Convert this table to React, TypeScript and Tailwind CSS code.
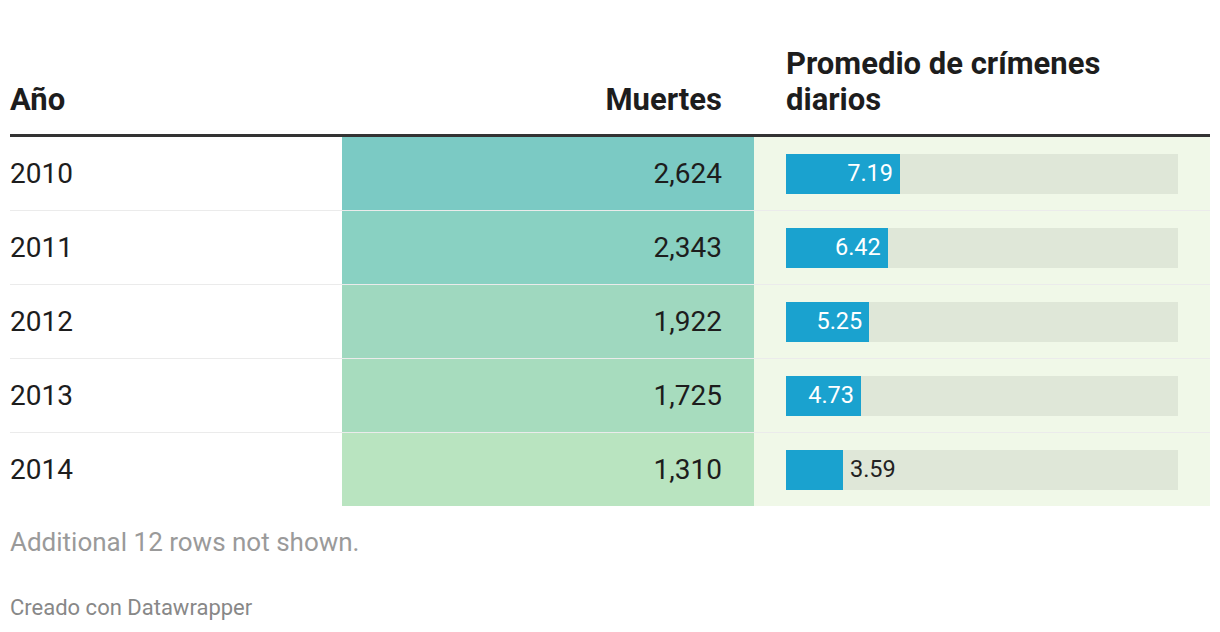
const rows = [
  { year: "2010", deaths: "2,624", avg: 7.19, bg: "bg-[#7bcac4]" },
  { year: "2011", deaths: "2,343", avg: 6.42, bg: "bg-[#89d1c2]" },
  { year: "2012", deaths: "1,922", avg: 5.25, bg: "bg-[#9fd8bf]" },
  { year: "2013", deaths: "1,725", avg: 4.73, bg: "bg-[#a7dcbe]" },
  { year: "2014", deaths: "1,310", avg: 3.59, bg: "bg-[#b9e4c0]" },
];

const MAX = 24.72;

function Bar({ value }: { value: number }) {
  const pct = (value / MAX) * 100;
  const inside = value > 4;
  return (
    <div className="flex h-10 w-full bg-[#dfe7d8]">
      <div className="flex h-full items-center justify-end bg-[#1aa2cf] pr-[7px]" style={{ width: `${pct}%` }}>
        {inside && <span className="text-[23.5px] text-white">{value.toFixed(2)}</span>}
      </div>
      {!inside && <span className="ml-[7px] flex items-center text-[23.5px] text-[#222]">{value.toFixed(2)}</span>}
    </div>
  );
}

export default function App() {
  return (
    <div className="w-[1220px] bg-white px-[10px] pt-[46px] font-['Roboto',sans-serif] text-[#1d1d1d]">
      <div className="grid grid-cols-[332px_412px_456px] items-end border-b-[3px] border-[#333] pb-4 text-[31px] font-bold leading-9">
        <div>Año</div>
        <div className="pr-8 text-right">Muertes</div>
        <div className="pl-8 pr-[100px]">Promedio de crímenes diarios</div>
      </div>
      {rows.map((r, i) => (
        <div
          key={r.year}
          className={`grid grid-cols-[332px_412px_456px] text-[28px] ${i < rows.length - 1 ? "h-[74px] border-b border-black/[0.08]" : "h-[73px]"}`}
        >
          <div className="flex items-center">{r.year}</div>
          <div className={`flex items-center justify-end pr-8 ${r.bg}`}>{r.deaths}</div>
          <div className="flex items-center bg-[#f0f8e8] px-8">
            <Bar value={r.avg} />
          </div>
        </div>
      ))}
      <div className="mt-[20px] text-[26px] leading-[32px] text-[#9a9a9a]">Additional 12 rows not shown.</div>
      <div className="mt-[36px] text-[22px] leading-[28px] text-[#888]">Creado con Datawrapper</div>
    </div>
  );
}
